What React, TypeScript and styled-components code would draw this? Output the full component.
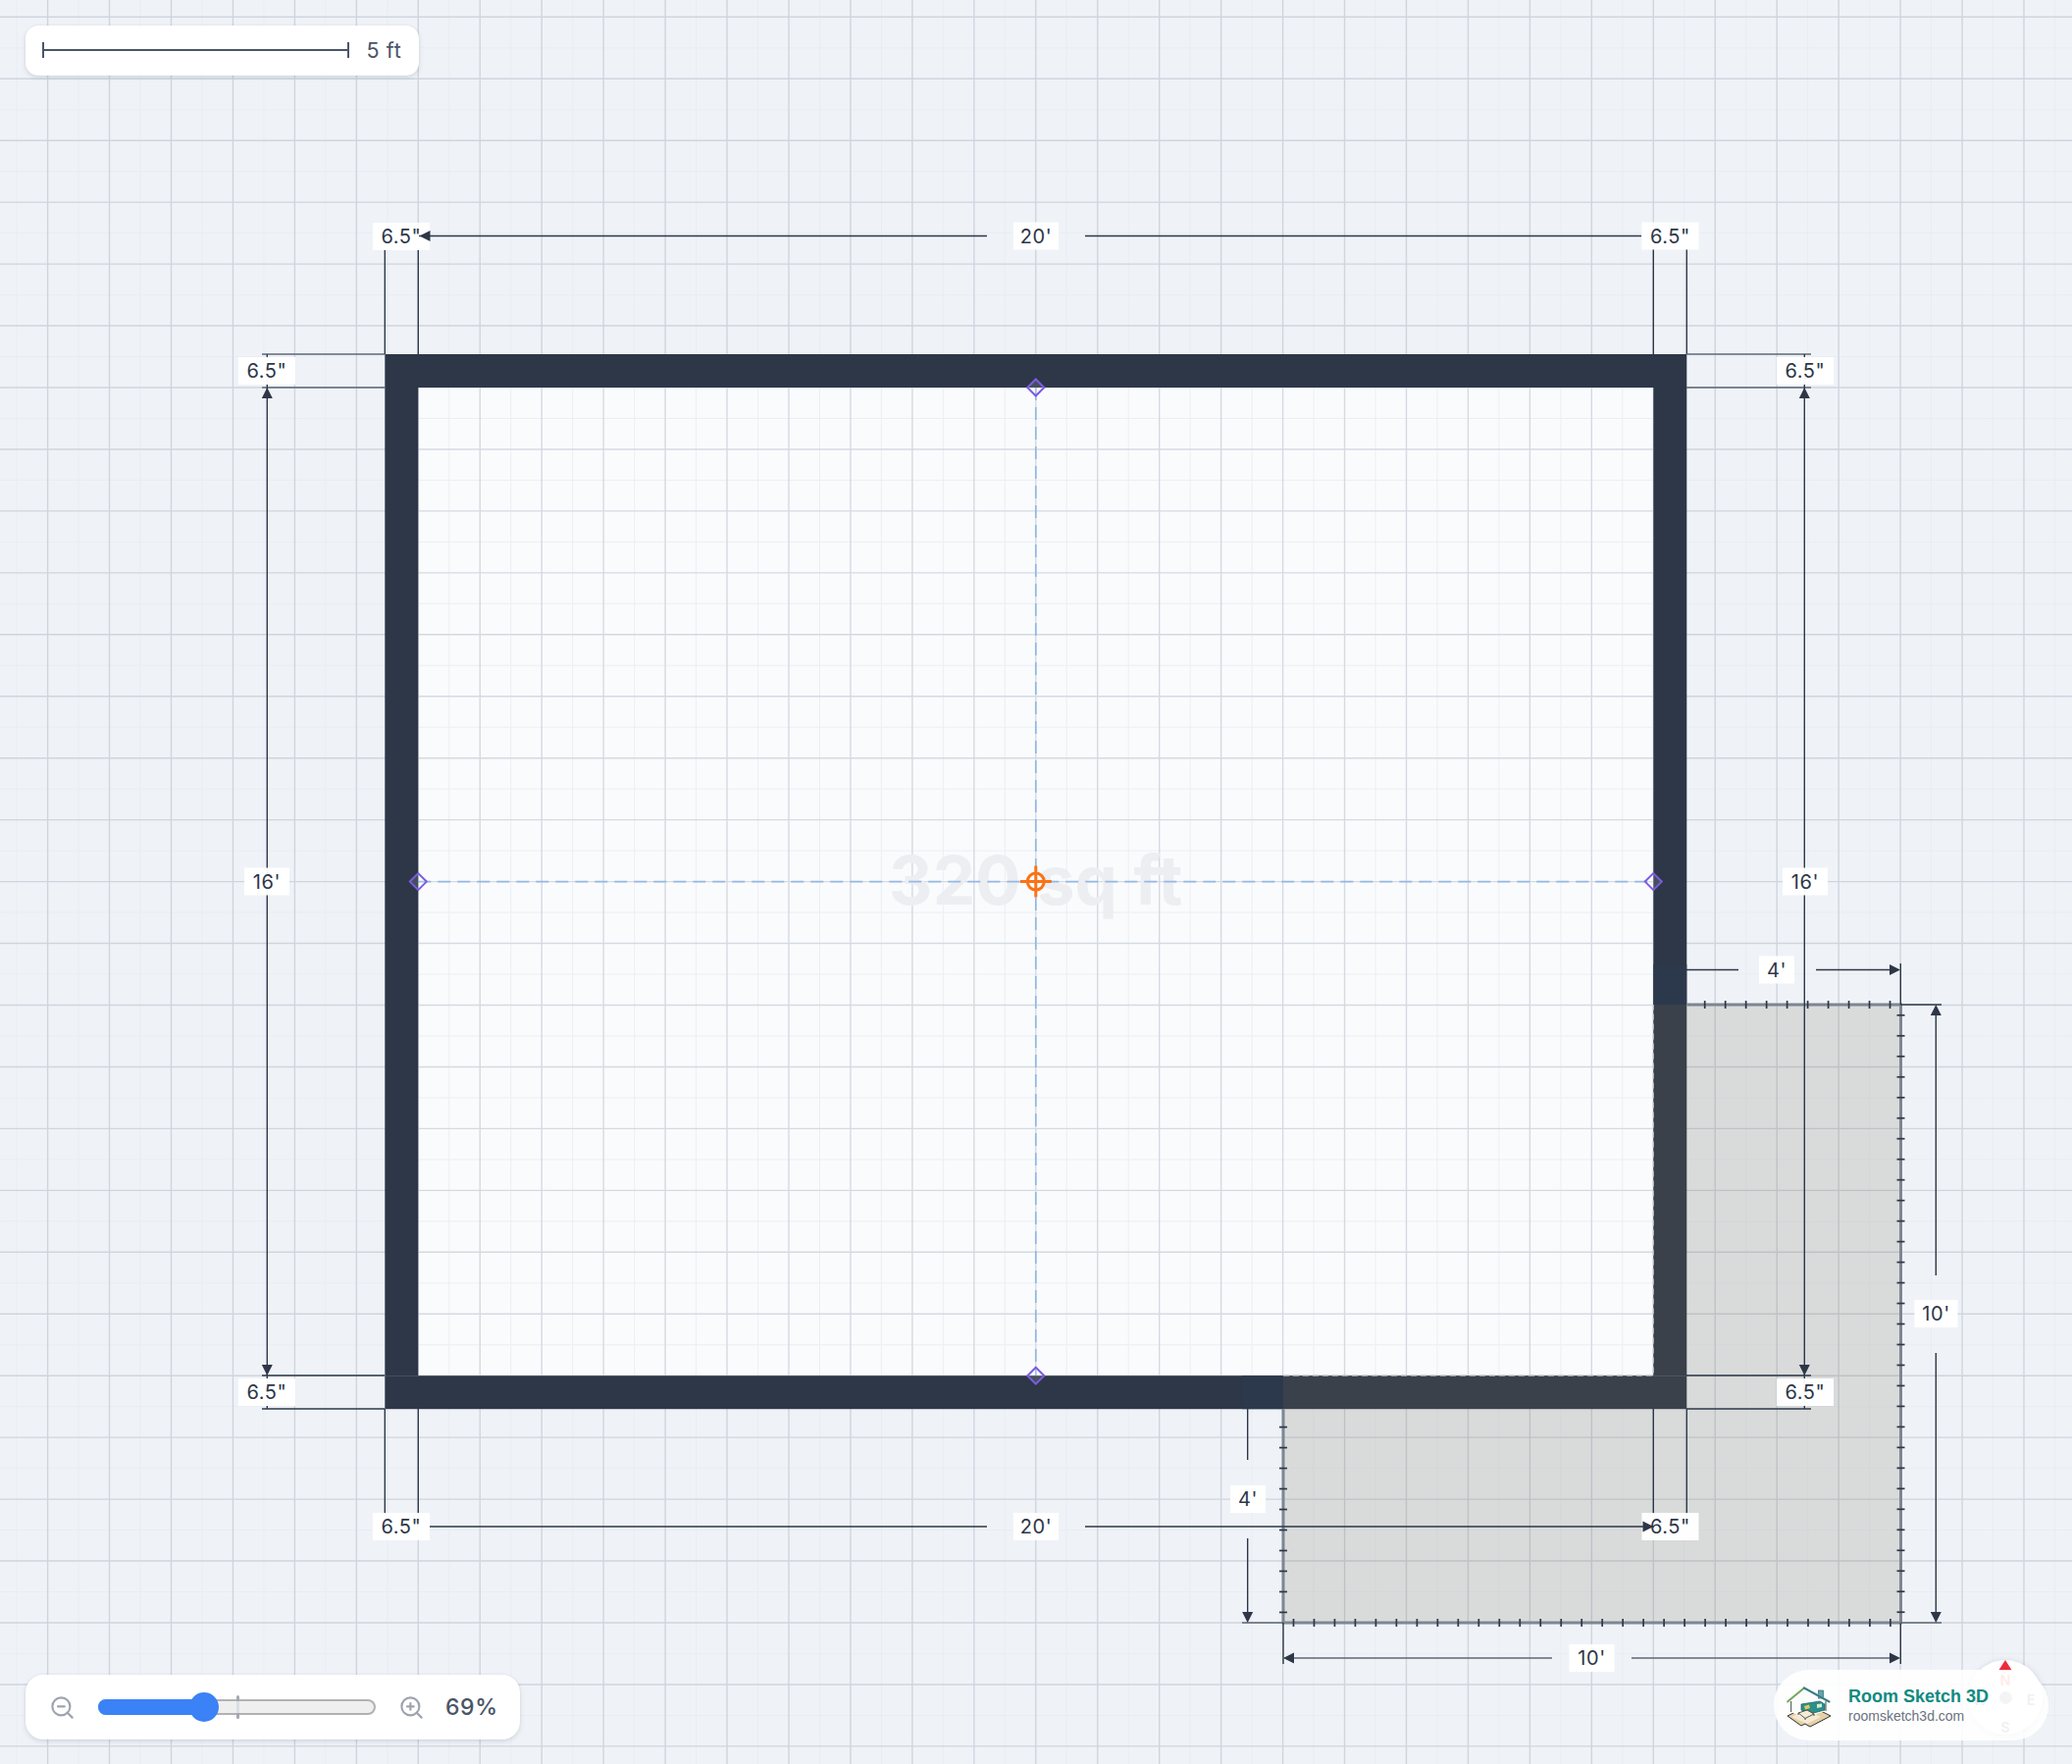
import React from "react";
import styled, { createGlobalStyle } from "styled-components";
import { ZoomIn, ZoomOut } from "lucide-react";

const GlobalStyle = createGlobalStyle`
  html, body { margin: 0; padding: 0; background: #eff3f8; }
  body { font-family: Inter, "Liberation Sans", sans-serif; }
`;

const Page = styled.div`
  position: relative;
  width: 2112px;
  height: 1798px;
  overflow: hidden;
  background: #eff3f8;
`;
const Canvas = styled.svg`
  position: absolute;
  inset: 0;
  display: block;
`;
const Panel = styled.div`
  position: absolute;
  display: flex;
  align-items: center;
  box-sizing: border-box;
  background: #fff;
  box-shadow: 0 2px 5px rgba(45, 55, 72, 0.14), 0 0 2px rgba(45, 55, 72, 0.08);
`;
const ScalePanel = styled(Panel)`
  left: 25.5px;
  top: 25.5px;
  width: 401px;
  height: 51px;
  padding: 0 17px;
  gap: 18px;
  border-radius: 13px;
`;
const ScaleBar = styled.div`
  position: relative;
  flex: none;
  width: 313px;
  height: 2px;
  background: #4a5568;
  &::before, &::after {
    content: "";
    position: absolute;
    top: -7px;
    width: 2px;
    height: 16px;
    background: #4a5568;
  }
  &::before { left: 0; }
  &::after { right: 0; }
`;
const ScaleText = styled.span`
  font-size: 21.5px;
  line-height: 24px;
  letter-spacing: 0.6px;
  white-space: nowrap;
  color: #4a5568;
`;
const ZoomPanel = styled(Panel)`
  left: 26px;
  top: 1707px;
  width: 504px;
  height: 66px;
  padding: 0 23px 0 24px;
  gap: 23px;
  border-radius: 18px;
  color: #9ca3af;
`;
const Track = styled.div`
  position: relative;
  flex: none;
  box-sizing: border-box;
  width: 283px;
  height: 16px;
  border: 2px solid #b2b2b2;
  border-radius: 8px;
  background: #efefef;
`;
const TrackFill = styled.div`
  position: absolute;
  left: -2px;
  top: -2px;
  height: 16px;
  border-radius: 8px 0 0 8px;
  background: #3b82f6;
`;
const Thumb = styled.div`
  position: absolute;
  top: -9px;
  width: 30px;
  height: 30px;
  margin-left: -15px;
  border-radius: 50%;
  background: #3b82f6;
`;
const Tick = styled.div`
  position: absolute;
  top: -6px;
  left: 138.5px;
  width: 3px;
  height: 24px;
  border-radius: 2px;
  background: linear-gradient(
    #a3a8b0 0 6px,
    #dcdde0 6px 18px,
    #a3a8b0 18px 24px
  );
`;
const Percent = styled.span`
  margin-left: -2px;
  font-size: 23px;
  font-weight: 500;
  letter-spacing: 0.6px;
  color: #4a5568;
`;
const Compass = styled.div`
  position: absolute;
  left: 2006px;
  top: 1692px;
  width: 76px;
  height: 76px;
  display: grid;
  grid-template-columns: 24px 28px 24px;
  grid-template-rows: 28px 20px 28px;
  justify-items: center;
  border-radius: 50%;
  background: #fff;
  box-shadow: 0 2px 6px rgba(45, 55, 72, 0.25);
`;
const Needle = styled.div`
  position: absolute;
  left: 31px;
  top: 0;
  width: 0;
  height: 0;
  border-left: 7px solid transparent;
  border-right: 7px solid transparent;
  border-bottom: 11px solid #ef2b3c;
`;
const CompassDot = styled.div`
  grid-area: 2 / 2;
  align-self: center;
  width: 13px;
  height: 13px;
  border-radius: 50%;
  background: #8a92a0;
`;
const Cardinal = styled.span<{ $area: string; $north?: boolean }>`
  grid-area: ${(p) => p.$area};
  align-self: end;
  font-size: 14px;
  line-height: 14px;
  font-weight: 700;
  color: ${(p) => (p.$north ? "#ef4444" : "#6b7280")};
`;
const Badge = styled.div`
  position: absolute;
  left: 1808px;
  top: 1702px;
  width: 280px;
  height: 72px;
  box-sizing: border-box;
  padding: 0 0 0 7px;
  display: flex;
  align-items: center;
  gap: 9px;
  border-radius: 36px;
  background: rgba(255, 255, 255, 0.9);
`;
const BadgeText = styled.div`
  display: flex;
  flex-direction: column;
  gap: 1px;
`;
const BadgeTitle = styled.div`
  font-family: "Liberation Sans", Arial, sans-serif;
  font-size: 18px;
  line-height: 22px;
  font-weight: 700;
  white-space: nowrap;
  color: #0f8a80;
`;
const BadgeUrl = styled.div`
  font-family: "Liberation Sans", Arial, sans-serif;
  font-size: 14px;
  line-height: 17px;
  white-space: nowrap;
  color: #6b7280;
`;

const GridLine = styled.line<{ $major?: boolean }>`
  stroke: ${(p) => (p.$major ? "#cfd5de" : "#e9edf3")};
  stroke-width: ${(p) => (p.$major ? 1.4 : 1)};
`;
const FloorWash = styled.rect`
  fill: #fff;
  fill-opacity: 0.12;
`;
const Watermark = styled.text`
  font-family: Inter, sans-serif;
  font-size: 69px;
  font-weight: 700;
  fill: #eceef2;
  text-anchor: middle;
`;
const Axis = styled.line`
  stroke: #93b9e2;
  stroke-width: 1.7;
  stroke-dasharray: 13 7;
`;
const Wall = styled.rect`
  fill: #2d3748;
`;
const WallPatch = styled.rect`
  fill: #2c394c;
`;
const Footprint = styled.path`
  fill: rgb(118, 116, 92);
  fill-opacity: 0.185;
`;
const FootprintDash = styled.path`
  fill: none;
  stroke: #b9bcc0;
  stroke-width: 1.2;
  stroke-dasharray: 6 4;
`;
const Edge = styled.path`
  fill: none;
  stroke: #7e8691;
  stroke-width: 3;
`;
const EdgeTick = styled.line`
  stroke: #2d3748;
  stroke-width: 1.7;
`;
const DimLine = styled.line<{ $soft?: boolean }>`
  stroke: ${(p) => (p.$soft ? "#5d6777" : "#2d3748")};
  stroke-width: 1.4;
`;
const Arrow = styled.polygon`
  fill: #2d3748;
`;
const TagBox = styled.rect`
  fill: #fff;
  fill-opacity: 0.96;
`;
const TagText = styled.text`
  font-family: Inter, sans-serif;
  font-size: 20px;
  letter-spacing: 0.6px;
  fill: #2d3748;
  text-anchor: middle;
`;
const Diamond = styled.polygon`
  fill: rgba(255, 255, 255, 0.12);
  stroke: #7c5ce0;
  stroke-width: 2;
`;
const CenterMark = styled.g`
  fill: none;
  stroke: #f97316;
  stroke-width: 3;
`;

const UNIT = 62.95;
const X0 = 426.3;
const Y0 = 395;
const WALL = 34;
const X1 = X0 + 20 * UNIT;
const Y1 = Y0 + 16 * UNIT;
const CX = (X0 + X1) / 2;
const CY = (Y0 + Y1) / 2;
const FX0 = 1308;
const FX1 = 1937.5;
const FY0 = 1024;
const FY1 = 1654;
const TICK = 20.98;

const range = (start: number, end: number, step: number) => {
  const out: number[] = [];
  for (let v = start; v <= end; v += step) out.push(v);
  return out;
};

type Dir = "up" | "down" | "left" | "right";
const head = (x: number, y: number, d: Dir) => {
  const l = 11;
  const w = 5.5;
  const pts: Record<Dir, number[]> = {
    up: [x, y, x - w, y + l, x + w, y + l],
    down: [x, y, x - w, y - l, x + w, y - l],
    left: [x, y, x + l, y - w, x + l, y + w],
    right: [x, y, x - l, y - w, x - l, y + w],
  };
  return pts[d].join(",");
};

type L = [number, number, number, number, boolean?];
const lines: L[] = [
  [392.3, 254, 392.3, 361], [426.3, 254, 426.3, 361],
  [1685.3, 254, 1685.3, 361], [1719.3, 254, 1719.3, 361],
  [1106, 240.5, 1673, 240.5], [432, 240.5, 1006, 240.5],
  [392.3, 1436, 392.3, 1542], [426.3, 1436, 426.3, 1542],
  [1685.3, 1436, 1685.3, 1542], [1719.3, 1436, 1719.3, 1542],
  [438, 1556, 1006, 1556], [1106, 1556, 1680, 1556],
  [267, 361, 392, 361, true], [267, 395, 392, 395, true],
  [267, 1402, 392, 1402], [267, 1436, 392, 1436],
  [272.3, 361, 272.3, 1436],
  [1719, 361, 1846, 361, true], [1719, 395, 1846, 395, true],
  [1719, 1402, 1846, 1402], [1719, 1436, 1846, 1436],
  [1839.3, 361, 1839.3, 1436],
  [1719, 988.5, 1772, 988.5], [1851, 988.5, 1932, 988.5], [1937.3, 982, 1937.3, 1024],
  [1271.7, 1436, 1271.7, 1488], [1271.7, 1568, 1271.7, 1650], [1266, 1654, 1308, 1654, true],
  [1312, 1690, 1582, 1690, true], [1663, 1690, 1932, 1690, true],
  [1308, 1654, 1308, 1696], [1937.3, 1654, 1937.3, 1696],
  [1973.3, 1028, 1973.3, 1300], [1973.3, 1379, 1973.3, 1650],
  [1937, 1024, 1979, 1024], [1937, 1654, 1979, 1654, true],
];

const arrowsUnderTags: [number, number, Dir][] = [
  [272.3, 395, "up"], [272.3, 1402, "down"],
  [1839.3, 395, "up"], [1839.3, 1402, "down"],
  [1937, 988.5, "right"], [1271.7, 1654, "down"],
  [1308, 1690, "left"], [1937, 1690, "right"],
  [1973.3, 1024, "up"], [1973.3, 1654, "down"],
];

type Tag = { x: number; y: number; w?: number; t: string };
const tags: Tag[] = [
  { x: 409, y: 241, t: '6.5"' }, { x: 1056, y: 240.5, w: 46, t: "20'" }, { x: 1702.5, y: 240.5, t: '6.5"' },
  { x: 272, y: 378, t: '6.5"' }, { x: 1840, y: 378, t: '6.5"' },
  { x: 272, y: 898.5, w: 46, t: "16'" }, { x: 1840, y: 898.5, w: 46, t: "16'" },
  { x: 1811, y: 988.5, w: 36, t: "4'" }, { x: 1973.5, y: 1339, w: 44, t: "10'" },
  { x: 272, y: 1419, t: '6.5"' }, { x: 1840, y: 1419, t: '6.5"' },
  { x: 1272, y: 1528, w: 36, t: "4'" },
  { x: 409, y: 1556, t: '6.5"' }, { x: 1056, y: 1556, w: 46, t: "20'" }, { x: 1702.5, y: 1556, t: '6.5"' },
  { x: 1622.5, y: 1690, w: 46, t: "10'" },
];

const diamonds: [number, number][] = [[CX, Y0], [X0, CY], [X1, CY], [CX, Y1]];

const Logo = () => (
  <svg width="60" height="50" viewBox="0 0 60 50" style={{ flex: "none" }} aria-hidden="true">
    <path d="M7 36 L29 25 L51 36 L30 47 L25 44 L21 46 Z" fill="#e7cfa6" stroke="#2d3436" strokeWidth="1" strokeLinejoin="round" />
    <path d="M11 37 L27 30 L41 37 L27 44 Z" fill="#f4ead6" />
    <path d="M10.7 21 V32 L24 38 L46 31 V21 L24 8 Z" fill="#fbfcfc" />
    <path d="M10.7 21 V32" stroke="#3b4a4a" strokeWidth="1" fill="none" />
    <path d="M46 21 V31" stroke="#3b4a4a" strokeWidth="1" fill="none" />
    <rect x="38.5" y="10" width="5" height="8" fill="#5fa6ad" stroke="#37606a" strokeWidth="0.7" />
    <path d="M7 21.5 L24 7.5" stroke="#a6d18a" strokeWidth="2.4" fill="none" strokeLinecap="round" />
    <path d="M24 7.5 L49.5 21.5" stroke="#4f98a4" strokeWidth="2.4" fill="none" strokeLinecap="round" />
    <path d="M7 21.5 L24 7.5 L49.5 21.5" stroke="#2f3d40" strokeWidth="0.6" fill="none" />
    <path d="M21 24 L40 21 L45 24 V30 L30 34 L21 30 Z" fill="#2b8f8a" stroke="#1d5f5e" strokeWidth="0.7" />
    <path d="M24 26 L29 24.5 L30 28 L25 29.5 Z" fill="#e2c95a" />
    <path d="M37 24 L42 23.5 L42 27 L37 28 Z" fill="#d7e8d9" />
    <path d="M18 33 L27 30 L34 34 L25 38.5 Z" fill="#f5ecd6" stroke="#4d4536" strokeWidth="0.9" />
    <path d="M25 38.5 V40 M18 33 V35 M34 34 V36" stroke="#4d4536" strokeWidth="1" />
  </svg>
);

export default function App() {
  const minorX = range(X0 - 6 * UNIT - UNIT / 2, 2112, UNIT);
  const majorX = range(X0 - 6 * UNIT, 2112, UNIT);
  const majorY = range(Y0 - 6 * UNIT, 1798, UNIT);
  const minorY = range(Y0 - 6 * UNIT - UNIT / 2, 1798, UNIT);
  const topTicks = range(1737.7, 1928, TICK);
  const bottomTicks = range(FX0 + 10.5, 1928, TICK);
  const rightTicks = range(FY0 + 10.8, 1645, TICK);
  const leftTicks = range(1454.6, 1645, TICK);
  const zoomPct = 108;

  return (
    <Page>
      <GlobalStyle />
      <Canvas width="2112" height="1798" viewBox="0 0 2112 1798">
        <rect x={X0} y={Y0} width={X1 - X0} height={Y1 - Y0} fill="#fafbfd" />
        {minorX.map((x) => <GridLine key={`a${x}`} x1={x} x2={x} y1={0} y2={1798} />)}
        {minorY.map((y) => <GridLine key={`b${y}`} x1={0} x2={2112} y1={y} y2={y} />)}
        {majorX.map((x) => <GridLine $major key={`c${x}`} x1={x} x2={x} y1={0} y2={1798} />)}
        {majorY.map((y) => <GridLine $major key={`d${y}`} x1={0} x2={2112} y1={y} y2={y} />)}
        <FloorWash x={X0} y={Y0} width={X1 - X0} height={Y1 - Y0} />

        <Watermark x={CX} y={922}>320 sq ft</Watermark>
        <Axis x1={X0} x2={X1} y1={CY} y2={CY} />
        <Axis x1={CX} x2={CX} y1={Y0} y2={Y1} />

        <Wall x={X0 - WALL} y={Y0 - WALL} width={X1 - X0 + 2 * WALL} height={WALL} />
        <Wall x={X0 - WALL} y={Y1} width={X1 - X0 + 2 * WALL} height={WALL} />
        <Wall x={X0 - WALL} y={Y0} width={WALL} height={Y1 - Y0} />
        <Wall x={X1} y={Y0} width={WALL} height={Y1 - Y0} />
        <WallPatch x={X1} y={983} width={WALL} height={41} />
        <WallPatch x={1266} y={Y1} width={42} height={WALL} />

        <Footprint d={`M${X1} ${FY0} H${FX1} V${FY1} H${FX0} V${Y1} H${X1} Z`} />
        <FootprintDash d={`M${FX0} ${Y1} H${X1} V${FY0}`} />
        <Edge d={`M${X1 + WALL} ${FY0} H${FX1} V${FY1} H${FX0} V${Y1 + WALL}`} />
        {topTicks.map((x) => <EdgeTick key={`t${x}`} x1={x} x2={x} y1={FY0 - 4} y2={FY0 + 4} />)}
        {bottomTicks.map((x) => <EdgeTick key={`u${x}`} x1={x} x2={x} y1={FY1 - 4} y2={FY1 + 4} />)}
        {rightTicks.map((y) => <EdgeTick key={`v${y}`} x1={FX1 - 4} x2={FX1 + 4} y1={y} y2={y} />)}
        {leftTicks.map((y) => <EdgeTick key={`w${y}`} x1={FX0 - 4} x2={FX0 + 4} y1={y} y2={y} />)}

        {lines.map(([x1, y1, x2, y2, soft], i) => (
          <DimLine key={i} $soft={soft} x1={x1} y1={y1} x2={x2} y2={y2} />
        ))}
        {arrowsUnderTags.map(([x, y, d], i) => <Arrow key={i} points={head(x, y, d)} />)}

        {tags.map(({ x, y, w = 58, t }, i) => (
          <g key={i}>
            <TagBox x={x - w / 2} y={y - 14} width={w} height={28} />
            <TagText x={x} y={y + 7}>{t}</TagText>
          </g>
        ))}

        <DimLine x1={427} x2={438} y1={240.5} y2={240.5} />
        <Arrow points={head(427.5, 240.5, "left")} />
        <DimLine x1={1673} x2={1680} y1={1556} y2={1556} />
        <Arrow points={head(1685.5, 1556, "right")} />

        {diamonds.map(([x, y]) => (
          <Diamond key={`${x}-${y}`} points={`${x},${y - 8.5} ${x + 8.5},${y} ${x},${y + 8.5} ${x - 8.5},${y}`} />
        ))}
        <CenterMark>
          <circle cx={CX} cy={CY} r={8.5} />
          <path d={`M${CX - 16} ${CY} H${CX + 16} M${CX} ${CY - 16} V${CY + 16}`} />
        </CenterMark>
      </Canvas>

      <ScalePanel>
        <ScaleBar />
        <ScaleText>5 ft</ScaleText>
      </ScalePanel>

      <ZoomPanel>
        <ZoomOut size={27} strokeWidth={1.9} style={{ flex: "none" }} />
        <Track>
          <TrackFill style={{ width: zoomPct }} />
          <Tick />
          <Thumb style={{ left: zoomPct - 2 }} />
        </Track>
        <ZoomIn size={27} strokeWidth={1.9} style={{ flex: "none" }} />
        <Percent>69%</Percent>
      </ZoomPanel>

      <Compass>
        <Needle />
        <Cardinal $north $area="1 / 2">N</Cardinal>
        <Cardinal $area="2 / 1">W</Cardinal>
        <CompassDot />
        <Cardinal $area="2 / 3">E</Cardinal>
        <Cardinal $area="3 / 2">S</Cardinal>
      </Compass>

      <Badge>
        <Logo />
        <BadgeText>
          <BadgeTitle>Room Sketch 3D</BadgeTitle>
          <BadgeUrl>roomsketch3d.com</BadgeUrl>
        </BadgeText>
      </Badge>
    </Page>
  );
}
